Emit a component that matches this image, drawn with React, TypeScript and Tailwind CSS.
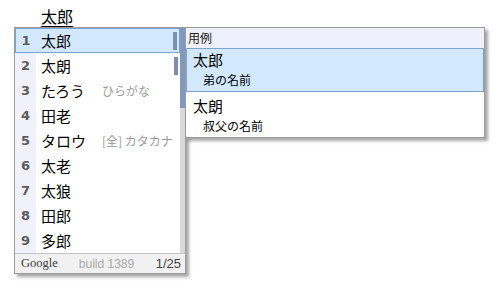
const candidates = [
  { text: "太郎", info: true },
  { text: "太朗", info: true },
  { text: "たろう", desc: "ひらがな" },
  { text: "田老" },
  { text: "タロウ", desc: "[全] カタカナ" },
  { text: "太老" },
  { text: "太狼" },
  { text: "田郎" },
  { text: "多郎" },
];

const examples = [
  { word: "太郎", note: "弟の名前" },
  { word: "太朗", note: "叔父の名前" },
];

export default function App() {
  return (
    <div className="w-[500px] h-[300px] bg-white font-['Noto_Sans_CJK_JP',sans-serif] text-black">
      <div className="h-[27px] pl-[41px] pt-[7px] text-[16px] leading-[18px]">
        <span className="underline underline-offset-[3px] decoration-1">太郎</span>
      </div>

      <div className="flex items-start pl-[14px]">
        {/* candidate window */}
        <div className="w-[172px] border border-[#9c9c9c] bg-white shadow-[3px_3px_3px_rgba(0,0,0,0.35)]">
          <div className="flex">
            <div className="w-[165px]">
              {candidates.map((c, i) => {
                const selected = i === 0;
                return (
                  <div
                    key={i}
                    className={
                      selected
                        ? "flex h-[25px] items-center border border-[#7da2ce] bg-[#d1e8ff]"
                        : "flex h-[25px] items-center"
                    }
                  >
                    <div
                      className={
                        selected
                          ? "flex h-full w-[20px] items-center justify-center font-['DejaVu_Sans',sans-serif] text-[13px] font-bold text-[#5c5c5c]"
                          : "flex h-full w-[21px] items-center justify-center bg-[#f1f1fc] font-['DejaVu_Sans',sans-serif] text-[13px] font-bold text-[#5c5c5c]"
                      }
                    >
                      {i + 1}
                    </div>
                    <div className="w-[66px] pl-[5px] text-[15px] leading-none whitespace-nowrap">{c.text}</div>
                    <div className="flex-1 text-[12px] leading-none text-[#9a9a9a] whitespace-nowrap">
                      {c.desc}
                    </div>
                    {c.info && <div className="mr-[2px] h-[18px] w-[4px] bg-[#7b8fb5]" />}
                  </div>
                );
              })}
            </div>
            <div className="w-[5px] bg-[#d9d9d9]">
              <div className="h-[80px] bg-[#8198c2]" />
            </div>
          </div>
          <div className="flex h-[20px] items-center border-t border-[#c4c4c4] bg-[#f1f1f1] pl-[6px] pr-[4px]">
            <span className="font-['Liberation_Serif',serif] text-[12.5px] text-[#3c3c3c]">Google</span>
            <span className="ml-[21px] font-['Liberation_Sans',sans-serif] text-[12px] text-[#a9a9a9]">build 1389</span>
            <span className="ml-auto font-['Liberation_Sans',sans-serif] text-[13px] text-[#444]">1/25</span>
          </div>
        </div>

        {/* usage window */}
        <div className="-ml-[1px] w-[300px] border border-[#9c9c9c] bg-white shadow-[3px_3px_3px_rgba(0,0,0,0.35)]">
          <div className="flex h-[20px] items-center bg-[#eef0fb] pl-[2px] text-[12px] text-[#222]">用例</div>
          {examples.map((e, i) => (
            <div
              key={i}
              className={
                i === 0
                  ? "h-[44px] border border-[#7da2ce] bg-[#d1e8ff] pl-[6px] pt-[2px]"
                  : "h-[45px] pl-[7px] pt-[5px]"
              }
            >
              <div className="text-[15px] leading-[18px]">{e.word}</div>
              <div className="mt-[4px] pl-[10px] text-[12px] leading-[14px]">{e.note}</div>
            </div>
          ))}
        </div>
      </div>
    </div>
  );
}
